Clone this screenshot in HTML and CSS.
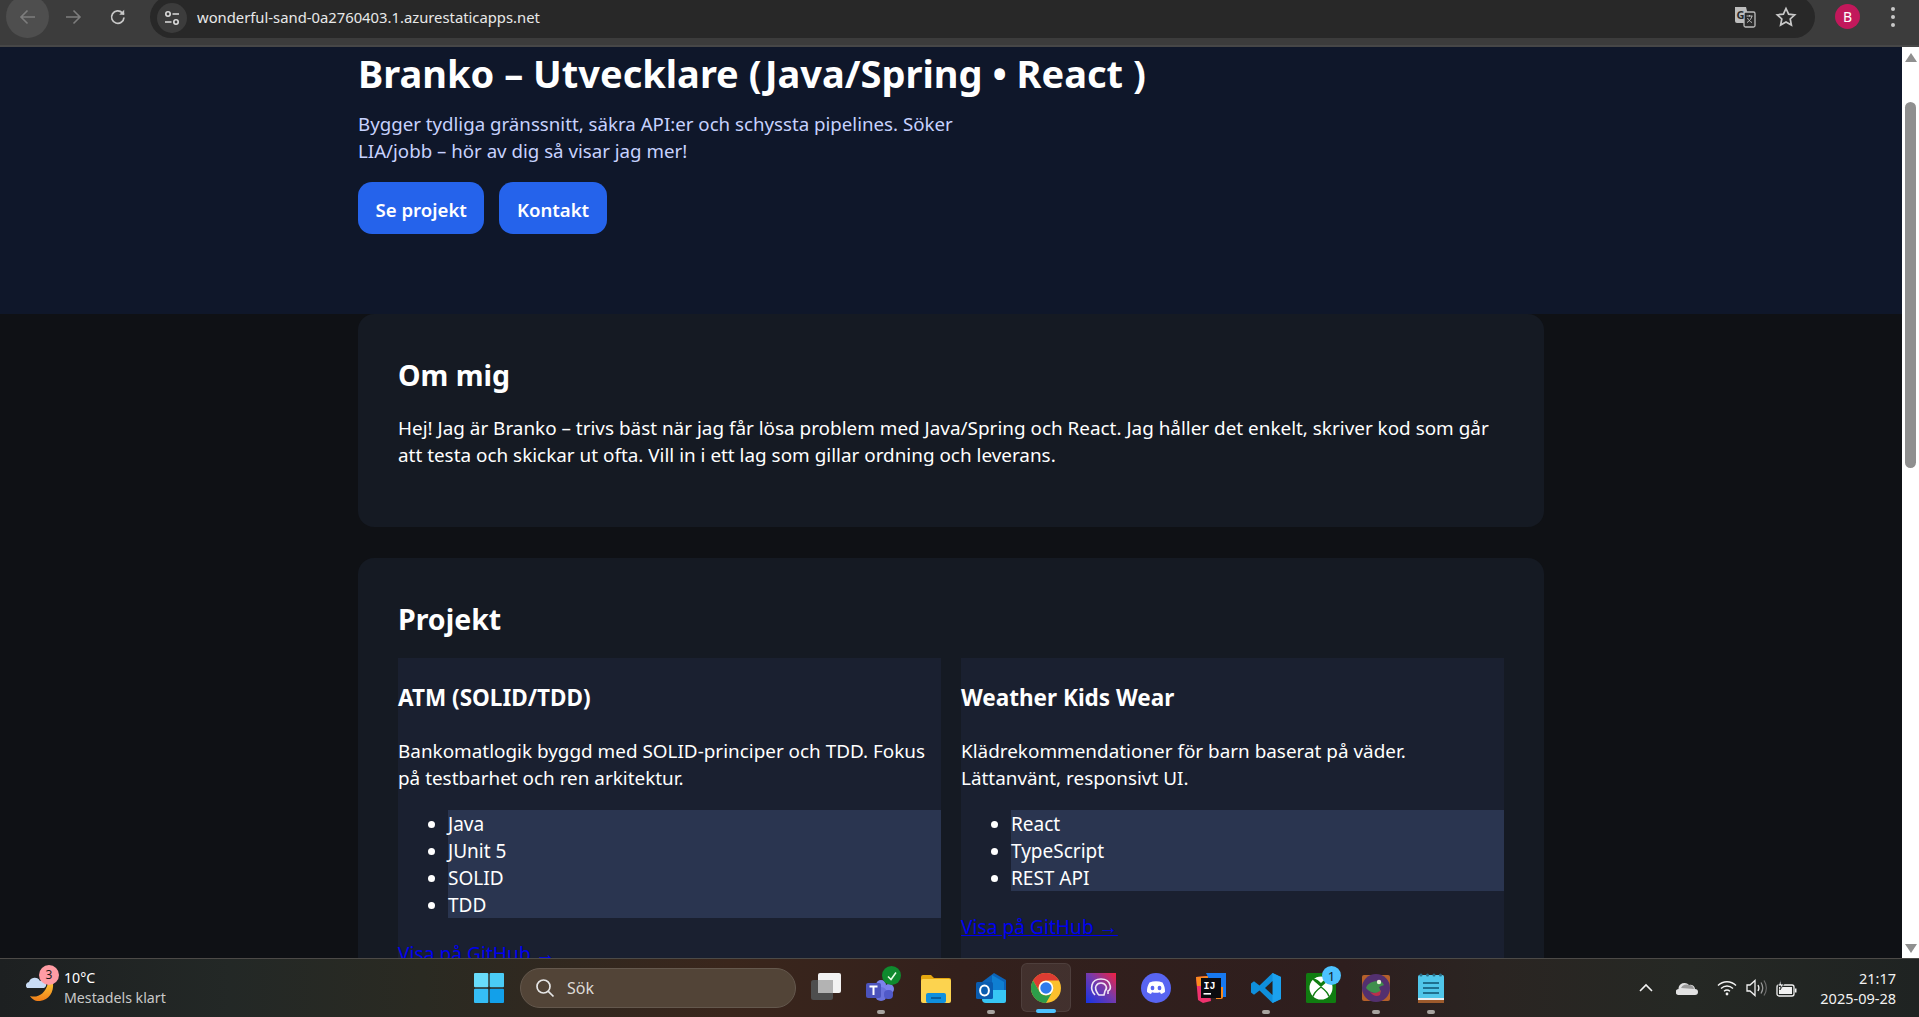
FILE: index.html
```html
<!DOCTYPE html>
<html lang="sv">
<head>
    <meta name="viewport" content="width=device-width, initial-scale=1.0">
    <title>Branko</title>
    <link rel="stylesheet" href="styles.css">
</head>
<body>
    <!-- webbläsarens verktygsfält -->
    <div class="toolbar">
        <span class="nav-btn nav-btn-back">
            <svg width="20" height="20" viewBox="0 0 20 20" fill="none" stroke="#7d7d7d" stroke-width="1.6"><path d="M17 10H3.5M9.5 3.5L3 10l6.500 6.500"/></svg>
        </span>
        <span class="nav-btn">
            <svg width="20" height="20" viewBox="0 0 20 20" fill="none" stroke="#7d7d7d" stroke-width="1.6"><path d="M3 10h13.500M10.500 3.500L17 10l-6.500 6.500"/></svg>
        </span>
        <span class="nav-btn">
            <svg width="20" height="20" viewBox="0 0 20 20" fill="none" stroke="#c8c8c8" stroke-width="1.7"><path d="M16 10.500a6.200 6.200 0 1 1-1.700-4.700L16 7.500"/><path d="M16.200 2.800v5h-5" stroke="none" fill="#c8c8c8"/></svg>
        </span>
        <div class="urlbar">
            <span class="site-info">
                <svg width="18" height="18" viewBox="0 0 18 18" fill="none" stroke="#dcdcdc" stroke-width="1.6"><circle cx="5" cy="5" r="2.200"/><path d="M9.500 5H16M2 13h6.500"/><circle cx="13" cy="13" r="2.200"/></svg>
            </span>
            <span class="url">wonderful-sand-0a2760403.1.azurestaticapps.net</span>
            <svg class="url-translate" width="22" height="22" viewBox="0 0 22 22">
                <path d="M1 1h11l4 16H3a2 2 0 0 1-2-2z" fill="#bdbdbd"/>
                <rect x="10" y="6" width="11" height="15" rx="1.500" fill="#2a2a2a" stroke="#bdbdbd" stroke-width="1.300"/>
                <text x="2.500" y="12.500" class="translate-text">G</text>
                <path d="M12.500 10h6M15.500 9v1.500M18 10c-.8 3-2.500 5-5 6.500M13.500 12c.8 2 2.500 3.500 4.500 4.500" fill="none" stroke="#bdbdbd" stroke-width="1"/>
            </svg>
            <svg class="url-star" width="22" height="22" viewBox="0 0 22 22" fill="none" stroke="#c8c8c8" stroke-width="1.700"><path d="M11 2.500l2.600 5.600 6.100.7-4.500 4.200 1.200 6-5.400-3-5.400 3 1.200-6-4.500-4.200 6.100-.7z"/></svg>
        </div>
        <span class="avatar">B</span>
        <span class="dots"><i></i><i></i><i></i></span>
    </div>

    <div class="viewport">
        <div class="page">
            <header class="hero">
                <div class="wrap">
                    <h1>Branko – Utvecklare (Java/Spring • React )</h1>
                    <p class="lead">Bygger tydliga gränssnitt, säkra API:er och schyssta pipelines. Söker LIA/jobb – hör av dig så visar jag mer!</p>
                    <div class="cta">
                        <a class="btn" href="#projekt">Se projekt</a>
                        <a class="btn" href="#kontakt">Kontakt</a>
                    </div>
                </div>
            </header>
            <main class="wrap">
                <section class="card">
                    <h2>Om mig</h2>
                    <p>Hej! Jag är Branko – trivs bäst när jag får lösa problem med Java/Spring och React. Jag håller det enkelt, skriver kod som går att testa och skickar ut ofta. Vill in i ett lag som gillar ordning och leverans.</p>
                </section>
                <section class="card" id="projekt">
                    <h2>Projekt</h2>
                    <div class="grid">
                        <article class="project">
                            <h3>ATM (SOLID/TDD)</h3>
                            <p>Bankomatlogik byggd med SOLID-principer och TDD. Fokus på testbarhet och ren arkitektur.</p>
                            <ul>
                                <li>Java</li>
                                <li>JUnit 5</li>
                                <li>SOLID</li>
                                <li>TDD</li>
                            </ul>
                            <a href="#">Visa på GitHub →</a>
                        </article>
                        <article class="project">
                            <h3>Weather Kids Wear</h3>
                            <p>Klädrekommendationer för barn baserat på väder. Lättanvänt, responsivt UI.</p>
                            <ul>
                                <li>React</li>
                                <li>TypeScript</li>
                                <li>REST API</li>
                            </ul>
                            <a href="#">Visa på GitHub →</a>
                        </article>
                    </div>
                </section>
            </main>
        </div>
        <div class="scrollbar">
            <span class="arrow-up"></span>
            <span class="thumb"></span>
            <span class="arrow-down"></span>
        </div>
    </div>

    <!-- aktivitetsfältet -->
    <footer class="taskbar">
        <div class="weather">
            <span class="weather-icon">
                <svg width="32" height="32" viewBox="0 0 32 32">
                    <defs><linearGradient id="moon" x1="0" y1="0" x2="0" y2="1"><stop offset="0" stop-color="#fcc335"/><stop offset="1" stop-color="#f07d18"/></linearGradient></defs>
                    <path d="M28 11c1 9-4 17-13 18-5 .5-8-2-10-5 7 2 15-1 18-13z" fill="url(#moon)"/>
                    <path d="M2 16a3.500 3.500 0 0 1 2-6 6 6 0 0 1 11-1 4 4 0 0 1 4 7z" fill="#c9dcf5"/>
                </svg>
                <span class="weather-badge">3</span>
            </span>
            <div class="weather-text">
                <span>10°C</span>
                <span class="weather-sub">Mestadels klart</span>
            </div>
        </div>
        <span class="start">
            <svg width="30" height="30" viewBox="0 0 30 30">
                <rect x="0" y="0" width="14.300" height="14.300" rx="1" fill="#68dcfb"/>
                <rect x="15.700" y="0" width="14.300" height="14.300" rx="1" fill="#4accf7"/>
                <rect x="0" y="15.700" width="14.300" height="14.300" rx="1" fill="#35bdf5"/>
                <rect x="15.700" y="15.700" width="14.300" height="14.300" rx="1" fill="#12a0ea"/>
            </svg>
        </span>
        <div class="search">
            <svg width="20" height="20" viewBox="0 0 20 20" fill="none" stroke="#e6e6e6" stroke-width="1.700"><circle cx="8.500" cy="8.500" r="6.500"/><path d="M13.300 13.300L18.500 18.500"/></svg>
            <span>Sök</span>
        </div>
        <div class="apps">
            <span class="app">
                <svg width="30" height="30" viewBox="0 0 30 30"><rect x="0" y="7" width="22" height="20" rx="2.500" fill="#4e4e4e"/><rect x="7" y="0" width="23" height="20" rx="2" fill="#f2f2f2"/><rect x="7" y="7" width="15" height="13" fill="#b3b3b3"/></svg>
            </span>
            <span class="app has-pill">
                <svg width="30" height="30" viewBox="0 0 30 30"><circle cx="23" cy="16" r="5" fill="#7b83eb"/><circle cx="15" cy="12" r="5" fill="#7b83eb"/><rect x="9" y="14" width="12" height="14" rx="6" fill="#6a72dc"/><rect x="18" y="17" width="9" height="9" rx="4" fill="#5059c9"/><rect x="0" y="10" width="15" height="15" rx="2" fill="#4b53bc"/><path d="M3.500 13.500h8M7.500 13.500v8.500" stroke="#fff" stroke-width="2" fill="none"/></svg>
                <span class="app-badge app-badge-ok"><svg width="12" height="12" viewBox="0 0 12 12" fill="none" stroke="#e8ffe8" stroke-width="1.500"><path d="M2 6.500L5 9.500l5-7"/></svg></span>
            </span>
            <span class="app">
                <svg width="30" height="30" viewBox="0 0 30 30"><path d="M0 4a2 2 0 0 1 2-2h8l3 3h15a2 2 0 0 1 2 2v4H0z" fill="#e5a70f"/><rect x="0" y="6" width="30" height="24" rx="2" fill="#fcd34f"/><rect x="5" y="20" width="20" height="10" rx="2" fill="#0f8fdd"/><rect x="10" y="24" width="10" height="2" fill="#0a5f9e"/></svg>
            </span>
            <span class="app has-pill">
                <svg width="30" height="30" viewBox="0 0 30 30"><path d="M6 9l12-9 12 7v10H6z" fill="#0c63b8"/><path d="M16 2l12 7v8H16z" fill="#0f7fd2"/><path d="M6 17h24v11a2 2 0 0 1-2 2H10a4 4 0 0 1-4-4z" fill="#37c6f4"/><rect x="0" y="9" width="17" height="17" rx="1.500" fill="#0a5cb0"/><ellipse cx="8.500" cy="17.500" rx="4.400" ry="5" fill="none" stroke="#fff" stroke-width="2"/></svg>
            </span>
            <span class="app app-active">
                <svg width="30" height="30" viewBox="0 0 30 30">
                    <circle cx="15" cy="15" r="15" fill="#fbc02d"/>
                    <path d="M2 7.500A15 15 0 0 1 28 7.500H15A7.500 7.500 0 0 0 8.500 18.750z" fill="#dd3c32"/>
                    <path d="M2 7.500A15 15 0 0 0 15 30l6.500-11.250A7.500 7.500 0 0 1 8.500 18.750z" fill="#2d9d4a"/>
                    <circle cx="15" cy="15" r="7.300" fill="#fff"/>
                    <circle cx="15" cy="15" r="5.700" fill="#2f7bec"/>
                </svg>
            </span>
            <span class="app">
                <svg width="30" height="30" viewBox="0 0 30 30">
                    <defs><linearGradient id="imp" x1="0" y1="1" x2="1" y2="0"><stop offset="0" stop-color="#1433e6"/><stop offset=".55" stop-color="#7b3aa8"/><stop offset="1" stop-color="#f3203f"/></linearGradient></defs>
                    <rect width="30" height="30" fill="url(#imp)"/>
                    <path d="M9 22c-3-3-4-6-3-10 1-4 5-6 9-6s8 2 9 6c1 3 0 5-2 6v3" fill="none" stroke="#f0e6f5" stroke-width="1.600"/>
                    <path d="M12 21c-2-3-3-6-2-8 1-2 3-3 5-3s4 1 5 3c1 2 0 4-1 5l-1 4h-5z" fill="none" stroke="#f0e6f5" stroke-width="1.600"/>
                </svg>
            </span>
            <span class="app">
                <svg width="30" height="30" viewBox="0 0 30 30"><circle cx="15" cy="15" r="15" fill="#5865f2"/><path d="M8.500 9.500c4-1.700 9-1.700 13 0 1.800 2.800 2.700 6 2.500 9.500-1.400 1-2.700 1.700-4 2l-1-1.800c-2.800.8-5.200.8-8 0l-1 1.800c-1.300-.3-2.600-1-4-2-.2-3.500.7-6.700 2.500-9.500z" fill="#fff"/><ellipse cx="11.500" cy="15" rx="1.900" ry="2.200" fill="#5865f2"/><ellipse cx="18.500" cy="15" rx="1.900" ry="2.200" fill="#5865f2"/></svg>
            </span>
            <span class="app">
                <svg width="30" height="30" viewBox="0 0 30 30"><path d="M0 4l12-1 3 25-8 2-5-3z" fill="#f0326e"/><path d="M0 4l12-1v10H1z" fill="#fa8a1d"/><path d="M10 0h20v24h-8z" fill="#1779f0"/><path d="M20 14h7v10a2 2 0 0 1-2 2h-5z" fill="#fa8a1d"/><rect x="5" y="5" width="20" height="20" fill="#0b0b0f"/><text x="7.500" y="15.500" class="idea-text">IJ</text><rect x="7.500" y="20" width="7.500" height="1.600" fill="#fff"/></svg>
            </span>
            <span class="app has-pill">
                <svg width="30" height="30" viewBox="0 0 30 30"><path d="M21.500 0L30 4v22l-8.500 4-13-12.500-5.500 4.300L0 19.500V10.500l3-2.300 5.500 4.300z" fill="#0f8fdc"/><path d="M21.500 0L30 4v22l-8.500 4z" fill="#1ba1ee"/><path d="M21.500 8v14l-7.500-7z" fill="#2b211e"/></svg>
            </span>
            <span class="app">
                <svg width="30" height="30" viewBox="0 0 30 30"><rect width="30" height="30" rx="1.500" fill="#107c10"/><circle cx="15" cy="15" r="11.500" fill="#fff"/><path d="M6 5.500c4-.5 7 2 9 4.500 2-2.500 5-5 9-4.500-1 2-5 5-9 8.500-4-3.500-8-6.500-9-8.500z" fill="#107c10"/><path d="M15 14c4 3 7 6 8 9.500M15 14c-4 3-7 6-8 9.500" fill="none" stroke="#107c10" stroke-width="1.400"/></svg>
                <span class="app-badge app-badge-count">1</span>
            </span>
            <span class="app has-pill">
                <svg width="30" height="30" viewBox="0 0 30 30"><rect x="1" y="2" width="28" height="26" rx="2" fill="#b5602a"/><circle cx="15" cy="15" r="14" fill="#53306f"/><path d="M5 15c2-6 9-8 16-6l2 3-5 2 2 5c-5 2-11 1-15-4z" fill="#3f8f4d"/><circle cx="18" cy="9" r="2.200" fill="#e8f0d8"/><path d="M9 19c4 2 8 1 11-2l-1 5c-3 2-7 1-10-3z" fill="#b9304d"/></svg>
            </span>
            <span class="app has-pill">
                <svg width="30" height="30" viewBox="0 0 30 30"><rect x="2" y="2" width="26" height="28" rx="1.500" fill="#50c6ea"/><rect x="2" y="27" width="26" height="3" fill="#9c5a2c"/><rect x="2" y="25" width="26" height="2" fill="#e8eef2"/><g fill="#2b6f88"><circle cx="5" cy="2" r="1.500"/><circle cx="11.500" cy="2" r="1.500"/><circle cx="18" cy="2" r="1.500"/><circle cx="24.500" cy="2" r="1.500"/></g><g fill="#1f6f8f"><rect x="7" y="9" width="16" height="2"/><rect x="7" y="14" width="16" height="2"/><rect x="7" y="19" width="16" height="2"/></g></svg>
            </span>
        </div>
        <div class="tray">
            <svg class="tray-chevron" width="16" height="16" viewBox="0 0 16 16" fill="none" stroke="#f2f2f2" stroke-width="1.600"><path d="M2 11l6-6 6 6"/></svg>
            <svg class="tray-cloud" width="22" height="14" viewBox="0 0 22 14"><path d="M3 14a3 3 0 0 1-.5-6A6 6 0 0 1 13 4a4.500 4.500 0 0 1 6 4 3 3 0 0 1 0 6z" fill="#e2e2e2"/><path d="M5 7a6 6 0 0 1 8-3 4.500 4.500 0 0 1 5 4z" fill="#9a9a9a"/></svg>
            <svg class="tray-wifi" width="20" height="16" viewBox="0 0 20 16" fill="none" stroke="#f2f2f2" stroke-width="1.400"><path d="M1 5.500c5-5 13-5 18 0M4 8.500c3.500-3.300 8.500-3.300 12 0M7 11.300c1.800-1.500 4.200-1.500 6 0"/><circle cx="10" cy="14" r="1.400" fill="#f2f2f2" stroke="none"/></svg>
            <svg class="tray-volume" width="21" height="18" viewBox="0 0 21 18" fill="none" stroke="#f2f2f2" stroke-width="1.300"><path d="M1 6h3l5-4.500v15L4 12H1z"/><path d="M12 6c1.200 2 1.200 4 0 6"/><path d="M15 3.500c2.200 3.500 2.200 7.500 0 11" stroke="#9a9a9a"/><path d="M18 1.500c3 4.500 3 10.500 0 15" stroke="#6f6f6f"/></svg>
            <svg class="tray-battery" width="21" height="17" viewBox="0 0 21 17" fill="none" stroke="#f2f2f2" stroke-width="1.300"><rect x="1" y="5" width="17" height="11" rx="2"/><rect x="3" y="7" width="13" height="7" fill="#f2f2f2" stroke="none"/><rect x="19" y="8.500" width="1.500" height="4" fill="#f2f2f2" stroke="none"/><path d="M5 0L2 6h3l-1 4 4-6H5z" fill="#f2f2f2" stroke="#24282a" stroke-width=".8"/></svg>
            <div class="clock">
                <span>21:17</span>
                <span>2025-09-28</span>
            </div>
        </div>
    </footer>
</body>
</html>
```

FILE: styles.css
```css
/* Sidan */
html, body {
    height: 100%;
}
body {
    margin: 0;
    display: flex;
    flex-direction: column;
    height: 100vh;
    overflow: hidden;
    background: #0f1115;
    color: #fff;
    font-family: "Noto Sans", "Open Sans", sans-serif;
}

/* Verktygsfält */
.toolbar {
    flex: none;
    height: 45px;
    display: flex;
    align-items: flex-start;
    background: #3c3c3c;
    border-bottom: 2px solid #474747;
    overflow: hidden;
    padding-left: 6px;
}
.nav-btn {
    width: 43px;
    height: 43px;
    margin-top: -5px;
    margin-right: 2px;
    display: flex;
    align-items: center;
    justify-content: center;
    border-radius: 50%;
    flex: none;
}
.nav-btn-back {
    background: #4e4e4e;
}
.urlbar {
    width: 1665px;
    margin-left: 9px;
    margin-top: -4px;
    height: 42px;
    display: flex;
    align-items: center;
    flex: none;
    box-sizing: border-box;
    background: #282828;
    border-radius: 21px;
}
.site-info {
    width: 30px;
    height: 30px;
    margin: 2px 0 0 7px;
    display: flex;
    align-items: center;
    justify-content: center;
    background: #3c3c3c;
    border-radius: 50%;
}
.url {
    margin-left: 10px;
    font-size: 14.8px;
    color: #e8e8e8;
    flex: 1;
}
.url-translate {
    margin-right: 19px;
}
.translate-text {
    fill: #2a2a2a;
    font-family: "Noto Sans", sans-serif;
    font-size: 11px;
    font-weight: 700;
}
.url-star {
    margin-right: 18px;
}
.avatar {
    width: 25px;
    height: 25px;
    margin: 4px 0 0 20px;
    border-radius: 50%;
    background: #c2185b;
    color: #fff;
    font-size: 14px;
    text-align: center;
    line-height: 25px;
    flex: none;
}
.dots {
    display: flex;
    flex-direction: column;
    gap: 4px;
    margin: 7px 0 0 31px;
}
.dots i {
    width: 4px;
    height: 4px;
    border-radius: 50%;
    background: #c8c8c8;
}

/* Innehåll */
.viewport {
    flex: 1;
    min-height: 0;
    display: flex;
    overflow: hidden;
}
.page {
    flex: 1;
    min-width: 0;
    background: #0f1115;
}
.wrap {
    width: 1186px;
    margin: 0 auto;
}
.hero {
    height: 267px;
    background: #0f172a;
    box-sizing: border-box;
    padding-top: 2px;
}
h1 {
    margin: 0;
    font-size: 38px;
    line-height: 48px;
    font-weight: 700;
}
.lead {
    width: 600px;
    margin: 13px 0 0;
    font-size: 18.7px;
    line-height: 27px;
    color: #c7d2fe;
}
.cta {
    display: flex;
    gap: 15px;
    margin-top: 18px;
}
.btn {
    display: block;
    padding: 0 17.5px;
    height: 52px;
    line-height: 55px;
    background: #2563eb;
    color: #fff;
    font-size: 18.6px;
    font-weight: 600;
    text-decoration: none;
    border-radius: 14px;
}
.card {
    background: #151a23;
    border-radius: 16px;
    padding: 40px;
    margin-bottom: 31px;
}
.card:first-child {
    height: 213px;
    box-sizing: border-box;
}
h2 {
    margin: 0;
    font-size: 28.5px;
    line-height: 42px;
    font-weight: 700;
}
.card p {
    margin: 19px 0 0;
    font-size: 18.9px;
    line-height: 27px;
}
.grid {
    display: grid;
    grid-template-columns: 1fr 1fr;
    gap: 20px;
    margin-top: 18px;
}
.project {
    background: #1a2030;
    font-size: 19px;
    line-height: 27px;
}
h3 {
    margin: 0;
    padding-top: 26px;
    font-size: 22.5px;
    line-height: 27px;
    font-weight: 700;
}
.card .project p {
    margin: 27px 0 0;
    font-size: 18.9px;
}
.project ul {
    margin: 18px 0 22px;
    padding-left: 50px;
}
.project li {
    height: 27px;
    line-height: 29px;
    background: #2a3550;
}
.project a {
    font-size: 19.2px;
    color: #0000ee;
}

/* Rullningslist */
.scrollbar {
    flex: none;
    width: 17px;
    display: flex;
    flex-direction: column;
    align-items: center;
    background: #fff;
}
.arrow-up, .arrow-down {
    width: 0;
    height: 0;
    border-left: 6px solid transparent;
    border-right: 6px solid transparent;
}
.arrow-up {
    margin-top: 6px;
    border-bottom: 9px solid #8f8f8f;
}
.thumb {
    width: 11px;
    height: 366px;
    margin-top: 40px;
    background: #8f8f8f;
    border-radius: 6px;
}
.arrow-down {
    margin-top: auto;
    margin-bottom: 5px;
    border-top: 9px solid #8f8f8f;
}

/* Aktivitetsfält */
.taskbar {
    flex: none;
    height: 58px;
    display: flex;
    align-items: center;
    border-top: 1px solid #4c4a47;
    background: linear-gradient(90deg, #1d2021 0%, #232826 12%, #2a2a22 22%, #3a261c 38%, #33201c 50%, #2e1e1e 70%, #2a2522 78%, #252824 88%, #1f2322 100%);
}
.weather {
    width: 464px;
    flex: none;
    display: flex;
    align-items: center;
    padding-left: 25px;
    box-sizing: border-box;
}
.weather-icon {
    position: relative;
    width: 32px;
    height: 32px;
    margin-right: 7px;
}
.weather-badge {
    position: absolute;
    left: 14px;
    top: -7px;
    width: 20px;
    height: 20px;
    border-radius: 50%;
    background: #ff9ca4;
    color: #1b1b1b;
    font-size: 12px;
    line-height: 20px;
    text-align: center;
}
.weather-text {
    display: flex;
    flex-direction: column;
    font-size: 14.2px;
    line-height: 20px;
}
.weather-sub {
    color: #c9c9c9;
}
.start {
    width: 50px;
    flex: none;
    display: flex;
    justify-content: center;
}
.search {
    width: 276px;
    height: 40px;
    margin-left: 6px;
    flex: none;
    display: flex;
    align-items: center;
    gap: 12px;
    padding-left: 14px;
    box-sizing: border-box;
    background: #524437;
    border: 1px solid #64584d;
    border-radius: 20px;
    color: #dedad6;
    font-size: 16px;
}
.apps {
    display: flex;
    margin-left: 2px;
    flex: none;
}
.app {
    position: relative;
    width: 55px;
    height: 50px;
    display: flex;
    align-items: center;
    justify-content: center;
}
.has-pill::after, .app-active::after {
    content: "";
    position: absolute;
    left: 50%;
    bottom: -1px;
    width: 8px;
    height: 4px;
    margin-left: -4px;
    border-radius: 2px;
    background: #a8a4a0;
}
.app-active::before {
    content: "";
    position: absolute;
    left: 2.500px;
    top: 0;
    width: 50px;
    height: 49px;
    box-sizing: border-box;
    background: #ffffff14;
    border: 1px solid #ffffff12;
    border-radius: 6px;
}
.app-active svg {
    position: relative;
}
.app-active::after {
    width: 20px;
    margin-left: -10px;
    bottom: 0;
    background: #4cc2ff;
}
.app-badge {
    position: absolute;
    left: 29px;
    top: 3px;
    width: 19px;
    height: 19px;
    border-radius: 50%;
    display: flex;
    align-items: center;
    justify-content: center;
    font-size: 13px;
}
.app-badge-ok {
    background: #0f8a2e;
}
.app-badge-count {
    background: #4cc2ff;
    color: #10202c;
}
.idea-text {
    fill: #fff;
    font-family: "Liberation Mono", monospace;
    font-size: 10px;
    font-weight: 700;
}
.tray {
    margin-left: auto;
    display: flex;
    align-items: center;
    padding-right: 23px;
}
.tray-cloud {
    margin-left: 22px;
}
.tray-wifi {
    margin-left: 19px;
}
.tray-volume {
    margin-left: 9px;
}
.tray-battery {
    margin-left: 9px;
}
.clock {
    display: flex;
    flex-direction: column;
    align-items: flex-end;
    margin-left: 23px;
    font-size: 14.5px;
    line-height: 20px;
    color: #f2f2f2;
}
```
